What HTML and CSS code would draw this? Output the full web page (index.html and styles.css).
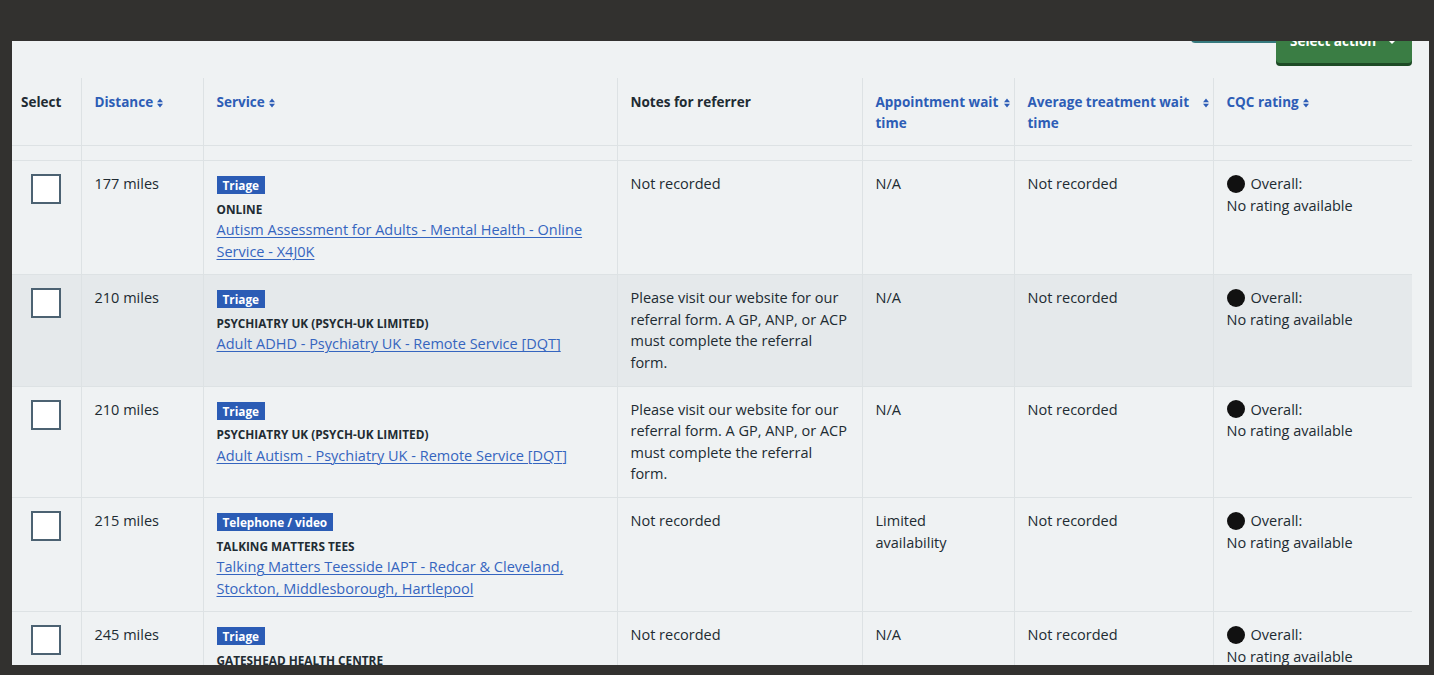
FILE: index.html
```html
<!DOCTYPE html>
<html lang="en">
<head>
<meta charset="utf-8">
<title>Service search results</title>
<link rel="stylesheet" href="styles.css">
</head>
<body>
<div class="frame">
  <div class="panel">
    <div class="content">
      <div class="toolbar">
        <div class="teal-bar"></div>
        <button class="action-btn" type="button">Select action <span class="caret"></span></button>
      </div>
      <table class="results">
        <colgroup>
          <col class="w-select"><col class="w-distance"><col class="w-service"><col class="w-notes"><col class="w-appt"><col class="w-avg"><col class="w-cqc">
        </colgroup>
        <thead>
          <tr>
            <th class="th-select">Select</th>
            <th><button class="sort" type="button"><span class="sort-label">Distance</span><svg class="sort-icon" viewBox="0 0 6 10" width="6" height="10"><path d="M0 4.2 3 0.5 6 4.2Z M0 5.8 3 9.5 6 5.8Z"/></svg></button></th>
            <th><button class="sort" type="button"><span class="sort-label">Service</span><svg class="sort-icon" viewBox="0 0 6 10" width="6" height="10"><path d="M0 4.2 3 0.5 6 4.2Z M0 5.8 3 9.5 6 5.8Z"/></svg></button></th>
            <th class="th-plain">Notes for referrer</th>
            <th><button class="sort" type="button"><span class="sort-label">Appointment wait time</span><svg class="sort-icon" viewBox="0 0 6 10" width="6" height="10"><path d="M0 4.2 3 0.5 6 4.2Z M0 5.8 3 9.5 6 5.8Z"/></svg></button></th>
            <th><button class="sort" type="button"><span class="sort-label">Average treatment wait time</span><svg class="sort-icon" viewBox="0 0 6 10" width="6" height="10"><path d="M0 4.2 3 0.5 6 4.2Z M0 5.8 3 9.5 6 5.8Z"/></svg></button></th>
            <th><button class="sort" type="button"><span class="sort-label">CQC rating</span><svg class="sort-icon" viewBox="0 0 6 10" width="6" height="10"><path d="M0 4.2 3 0.5 6 4.2Z M0 5.8 3 9.5 6 5.8Z"/></svg></button></th>
          </tr>
        </thead>
        <tbody>
          <tr class="spacer"><td></td><td></td><td></td><td></td><td></td><td></td><td></td></tr>

          <tr>
            <td class="td-select"><span class="checkbox"></span></td>
            <td>177 miles</td>
            <td>
              <span class="tag">Triage</span>
              <div class="org">ONLINE</div>
              <a class="svc-link" href="#">Autism Assessment for Adults - Mental Health - Online Service - X4J0K</a>
            </td>
            <td>Not recorded</td>
            <td>N/A</td>
            <td>Not recorded</td>
            <td><div class="cqc"><span class="dot"></span>Overall:</div>No rating available</td>
          </tr>

          <tr class="highlight">
            <td class="td-select"><span class="checkbox"></span></td>
            <td>210 miles</td>
            <td>
              <span class="tag">Triage</span>
              <div class="org">PSYCHIATRY UK (PSYCH-UK LIMITED)</div>
              <a class="svc-link" href="#">Adult ADHD - Psychiatry UK - Remote Service [DQT]</a>
            </td>
            <td>Please visit our website for our referral form. A GP, ANP, or ACP must complete the referral form.</td>
            <td>N/A</td>
            <td>Not recorded</td>
            <td><div class="cqc"><span class="dot"></span>Overall:</div>No rating available</td>
          </tr>

          <tr>
            <td class="td-select"><span class="checkbox"></span></td>
            <td>210 miles</td>
            <td>
              <span class="tag">Triage</span>
              <div class="org">PSYCHIATRY UK (PSYCH-UK LIMITED)</div>
              <a class="svc-link" href="#">Adult Autism - Psychiatry UK - Remote Service [DQT]</a>
            </td>
            <td>Please visit our website for our referral form. A GP, ANP, or ACP must complete the referral form.</td>
            <td>N/A</td>
            <td>Not recorded</td>
            <td><div class="cqc"><span class="dot"></span>Overall:</div>No rating available</td>
          </tr>

          <tr>
            <td class="td-select"><span class="checkbox"></span></td>
            <td>215 miles</td>
            <td>
              <span class="tag">Telephone / video</span>
              <div class="org">TALKING MATTERS TEES</div>
              <a class="svc-link" href="#">Talking Matters Teesside IAPT - Redcar &amp; Cleveland, Stockton, Middlesborough, Hartlepool</a>
            </td>
            <td>Not recorded</td>
            <td>Limited availability</td>
            <td>Not recorded</td>
            <td><div class="cqc"><span class="dot"></span>Overall:</div>No rating available</td>
          </tr>

          <tr>
            <td class="td-select"><span class="checkbox"></span></td>
            <td>245 miles</td>
            <td>
              <span class="tag">Triage</span>
              <div class="org">GATESHEAD HEALTH CENTRE</div>
              <a class="svc-link" href="#">Gateshead Talking Therapies</a>
            </td>
            <td>Not recorded</td>
            <td>N/A</td>
            <td>Not recorded</td>
            <td><div class="cqc"><span class="dot"></span>Overall:</div>No rating available</td>
          </tr>
        </tbody>
      </table>
    </div>
  </div>
</div>
</body>
</html>
```

FILE: styles.css
```css
html {
  background: #32312f;
}

body {
  margin: 0;
  background: #32312f;
  font-family: "Open Sans", "Noto Sans", sans-serif;
  font-size: 14.5px;
  line-height: 21.6px;
  color: #212b32;
}

.frame {
  padding: 41px 5px 0 12px;
}

.panel {
  height: 624px;
  overflow: hidden;
  background: #eff2f3;
}

.content {
  margin-top: -30px;
  padding-right: 17px;
}

/* toolbar */
.toolbar {
  display: flex;
  flex-direction: column;
  align-items: flex-end;
}

.teal-bar {
  width: 221px;
  height: 32px;
  background: #367a7e;
  border-radius: 0 0 4px 4px;
}

.action-btn {
  margin-top: -22px;
  width: 136px;
  height: 42px;
  display: flex;
  align-items: center;
  gap: 10px;
  padding: 0 0 0 14px;
  border: 0;
  border-radius: 4px;
  background: #3a7d44;
  box-shadow: 0 3px 0 #1d4a25;
  color: #ffffff;
  font-family: inherit;
  font-size: 13.5px;
  font-weight: 700;
  line-height: 21.6px;
}

.caret {
  width: 0;
  height: 0;
  border-left: 4px solid transparent;
  border-right: 4px solid transparent;
  border-top: 4px solid #ffffff;
  margin-left: 2px;
}

/* table */
.results {
  margin-top: 15px;
  width: 1400px;
  table-layout: fixed;
  border-collapse: collapse;
}

.w-select { width: 69px; }
.w-distance { width: 122px; }
.w-service { width: 414px; }
.w-notes { width: 245px; }
.w-appt { width: 152px; }
.w-avg { width: 199px; }
.w-cqc { width: 199px; }

.results th,
.results td {
  border-left: 1px solid #dde2e4;
  border-bottom: 1px solid #dde2e4;
  vertical-align: top;
  text-align: left;
}

.results th:first-child,
.results td:first-child {
  border-left: 0;
}

.results th {
  padding: 14px 4px 11px 13px;
  height: 42px;
  font-size: 13.5px;
  line-height: 21px;
  font-weight: 700;
}

.results th.th-select {
  padding-left: 9px;
}

.sort {
  display: flex;
  align-items: flex-start;
  gap: 4px;
  width: 100%;
  padding: 0;
  margin: 0;
  border: 0;
  background: none;
  text-align: left;
  font-family: inherit;
  font-size: 13.5px;
  font-weight: 700;
  line-height: 21px;
  color: #2d5db6;
  cursor: pointer;
}

.sort-label {
  flex: 0 1 auto;
}

.sort-icon {
  flex: 0 0 auto;
  margin-top: 6px;
  fill: #2d5db6;
}

.results td {
  padding: 12px 13px 12px 13px;
}

.results .spacer td {
  height: 14px;
  padding: 0;
}

.results td.td-select {
  padding: 13px 0 0 0;
}

.highlight td {
  background: #e5e9eb;
}

.checkbox {
  display: block;
  width: 30px;
  height: 30px;
  box-sizing: border-box;
  margin: 0 auto;
  border: 2px solid #4c6272;
  background: #ffffff;
}

.tag {
  display: inline-block;
  vertical-align: top;
  margin-top: 3px;
  padding: 0 6px;
  height: 18px;
  line-height: 18px;
  background: #2b5cb5;
  color: #ffffff;
  font-size: 11.8px;
  font-weight: 700;
}

.org {
  margin-top: 5px;
  font-size: 11.8px;
  line-height: 19.5px;
  font-weight: 700;
  color: #212b32;
}

.svc-link {
  color: #3565bf;
  text-decoration: underline;
  text-underline-offset: 2px;
  text-decoration-thickness: 1px;
}

.cqc {
  display: flex;
  align-items: center;
  gap: 6px;
}

.dot {
  width: 18px;
  height: 18px;
  border-radius: 50%;
  background: #111111;
}
```
